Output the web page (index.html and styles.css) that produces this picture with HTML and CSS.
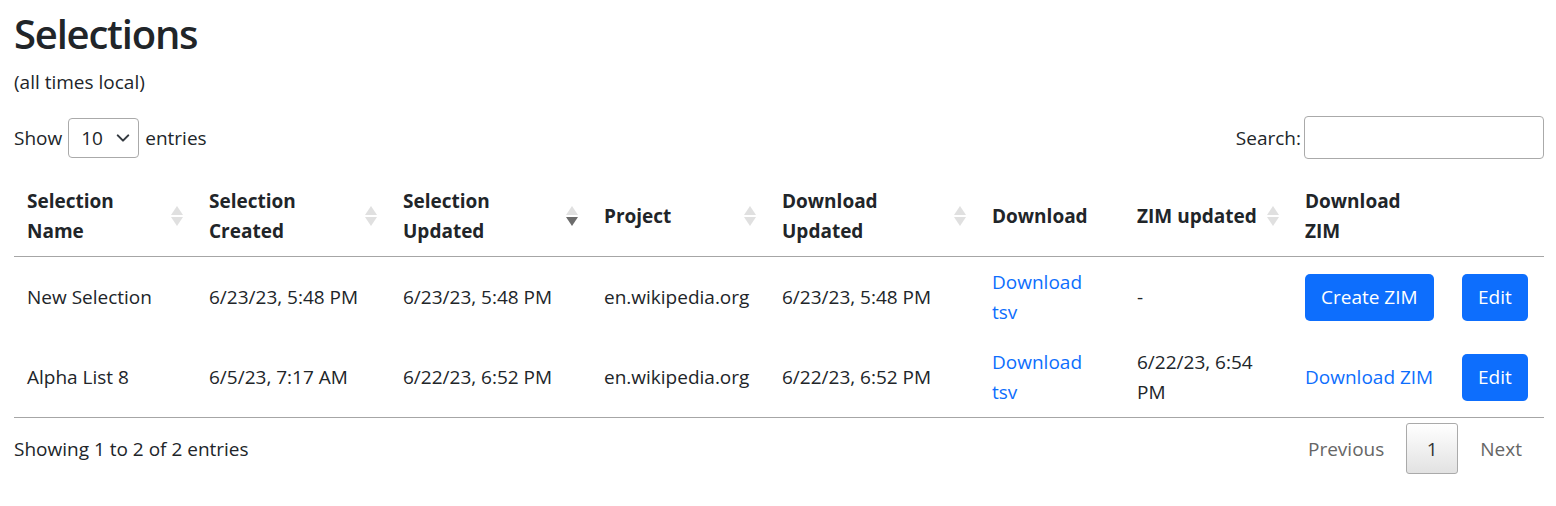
FILE: index.html
```html
<!DOCTYPE html>
<html lang="en">
<head>
<meta charset="utf-8">
<title>Selections</title>
<link rel="stylesheet" href="styles.css">
</head>
<body>
<div class="page">
  <h1 class="title">Selections</h1>
  <p class="note">(all times local)</p>
  <div class="dt-top">
    <label class="dt-length">Show
      <span class="select">10<svg class="chev" viewBox="0 0 16 16" width="14" height="14"><path d="M2 5l6 6 6-6" fill="none" stroke="#343a40" stroke-width="2.4" stroke-linecap="round" stroke-linejoin="round"/></svg></span>
      entries</label>
    <label class="dt-search">Search:<span class="search-input"></span></label>
  </div>
  <table class="dt">
    <colgroup>
      <col style="width:182px"><col style="width:194px"><col style="width:201px"><col style="width:178px"><col style="width:210px"><col style="width:145px"><col style="width:168px"><col style="width:157px"><col style="width:95px">
    </colgroup>
    <thead>
      <tr>
        <th class="sortable">Selection<br>Name<span class="sort"><i class="up"></i><i class="down"></i></span></th>
        <th class="sortable">Selection<br>Created<span class="sort"><i class="up"></i><i class="down"></i></span></th>
        <th class="sortable">Selection<br>Updated<span class="sort"><i class="up"></i><i class="down active"></i></span></th>
        <th class="sortable">Project<span class="sort"><i class="up"></i><i class="down"></i></span></th>
        <th class="sortable">Download<br>Updated<span class="sort"><i class="up"></i><i class="down"></i></span></th>
        <th>Download</th>
        <th class="sortable">ZIM updated<span class="sort"><i class="up"></i><i class="down"></i></span></th>
        <th>Download<br>ZIM</th>
        <th></th>
      </tr>
    </thead>
    <tbody>
      <tr>
        <td>New Selection</td>
        <td>6/23/23, 5:48 PM</td>
        <td>6/23/23, 5:48 PM</td>
        <td>en.wikipedia.org</td>
        <td>6/23/23, 5:48 PM</td>
        <td><a href="#">Download<br>tsv</a></td>
        <td>-</td>
        <td><span class="btn">Create ZIM</span></td>
        <td><span class="btn">Edit</span></td>
      </tr>
      <tr>
        <td>Alpha List 8</td>
        <td>6/5/23, 7:17 AM</td>
        <td>6/22/23, 6:52 PM</td>
        <td>en.wikipedia.org</td>
        <td>6/22/23, 6:52 PM</td>
        <td><a href="#">Download<br>tsv</a></td>
        <td>6/22/23, 6:54<br>PM</td>
        <td><a href="#">Download ZIM</a></td>
        <td><span class="btn">Edit</span></td>
      </tr>
    </tbody>
  </table>
  <div class="dt-bottom">
    <div class="dt-info">Showing 1 to 2 of 2 entries</div>
    <div class="pager">
      <span class="pg disabled">Previous</span>
      <span class="pg current">1</span>
      <span class="pg disabled">Next</span>
    </div>
  </div>
</div>
</body>
</html>
```

FILE: styles.css
```css
* { box-sizing: border-box; }
html, body { margin: 0; padding: 0; background: #fff; }
body {
  font-family: "Open Sans", "Noto Sans", sans-serif;
  font-size: 20px;
  line-height: 30px;
  color: #212529;
}
.page { padding: 8px 12px 0 14px; }
.title {
  margin: 0;
  font-size: 40px;
  line-height: 52px;
  letter-spacing: -1.2px;
  font-weight: 600;
}
.note { margin: 7px 0 0; font-size: 19px; }
.dt-top {
  display: flex;
  justify-content: space-between;
  align-items: center;
  margin-top: 19px;
}
.dt-length, .dt-search { display: flex; align-items: center; gap: 6px; font-size: 19px; }
.dt-search { gap: 3px; }
.select {
  display: inline-flex;
  align-items: center;
  justify-content: space-between;
  width: 71px;
  height: 40px;
  padding: 0 8px 0 12px;
  border: 1px solid #aaa;
  border-radius: 4px;
  font-size: 19px;
}
.search-input {
  display: block;
  width: 240px;
  height: 43px;
  border: 1px solid #aaa;
  border-radius: 4px;
}
table.dt {
  width: 100%;
  table-layout: fixed;
  border-collapse: collapse;
  margin-top: 17px;
}
.dt th {
  position: relative;
  text-align: left;
  font-weight: 700;
  vertical-align: middle;
  padding: 10px 13px 10px 13px;
  border-bottom: 1px solid #a6a6a6;
  font-size: 19px;
}
.dt td {
  padding: 10px 13px;
  vertical-align: middle;
  height: 80px;
  font-size: 19px;
}
.dt tbody tr:last-child td { border-bottom: 1px solid #a6a6a6; }
.dt a { color: #0d6efd; text-decoration: none; }
.sort {
  position: absolute;
  right: 13px;
  top: 50%;
  transform: translateY(-50%);
  display: flex;
  flex-direction: column;
  gap: 2px;
}
.sort i {
  display: block;
  width: 0; height: 0;
  border-left: 6px solid transparent;
  border-right: 6px solid transparent;
}
.sort .up { border-bottom: 9px solid #e0e0e0; }
.sort .down { border-top: 9px solid #e0e0e0; }
.sort .down.active { border-top-color: #6c6c6c; }
.btn {
  display: inline-flex;
  align-items: center;
  justify-content: center;
  height: 47px;
  padding: 0 16px;
  background: #0d6efd;
  color: #fff;
  border-radius: 5px;
  white-space: nowrap;
}
.dt-bottom {
  display: flex;
  justify-content: space-between;
  align-items: center;
  padding-top: 5px;
}
.dt-info { font-size: 19px; }
.pager { display: flex; align-items: center; }
.pg { display: inline-flex; align-items: center; justify-content: center; height: 51px; padding: 0 22px; font-size: 19px; color: #666; }
.pg.current {
  width: 52px;
  padding: 0;
  color: #333;
  border: 1px solid #aaa;
  border-radius: 3px;
  background: linear-gradient(#fff, #e2e2e2);
}
```
